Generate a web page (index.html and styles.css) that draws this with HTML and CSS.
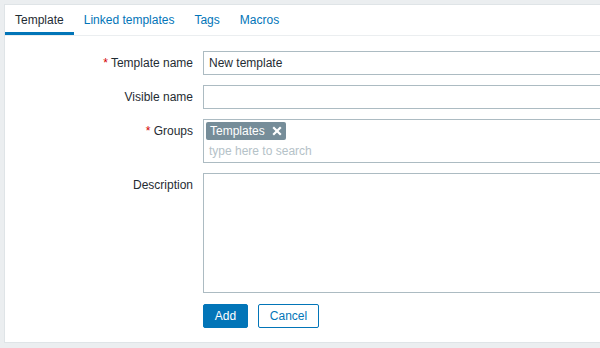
FILE: index.html
```html
<!DOCTYPE html>
<html>
<head>
<meta charset="utf-8">
<link rel="stylesheet" href="styles.css">
</head>
<body>
<div class="panel">
  <ul class="tabs">
    <li class="tab active">Template</li>
    <li class="tab">Linked templates</li>
    <li class="tab">Tags</li>
    <li class="tab">Macros</li>
  </ul>
  <form class="form">
    <label class="label"><span class="req">*</span> Template name</label>
    <div class="field"><input class="input" type="text" value="New template"></div>

    <label class="label">Visible name</label>
    <div class="field"><input class="input" type="text"></div>

    <label class="label"><span class="req">*</span> Groups</label>
    <div class="field">
      <div class="multiselect">
        <div class="tags">
          <span class="tag">Templates
            <svg class="tag-x" width="10" height="10" viewBox="0 0 10 10"><path d="M1.2 1.2L8.8 8.8M8.8 1.2L1.2 8.8" stroke="#fff" stroke-width="2.2"/></svg>
          </span>
        </div>
        <div class="search">type here to search</div>
      </div>
    </div>

    <label class="label">Description</label>
    <div class="field"><textarea class="textarea"></textarea></div>

    <div></div>
    <div class="buttons">
      <button type="button" class="btn btn-primary">Add</button>
      <button type="button" class="btn btn-alt">Cancel</button>
    </div>
  </form>
</div>
</body>
</html>
```
FILE: styles.css
```css
html, body {
  margin: 0;
  padding: 0;
  overflow: hidden;
}
body {
  background: #ebeef0;
  font-family: "Liberation Sans", Arial, sans-serif;
  font-size: 12px;
  color: #1f2c33;
  width: 600px;
  height: 348px;
}
.panel {
  margin: 4px 0 0 4px;
  width: 700px;
  background: #fff;
  border: 1px solid #dfe4e7;
  border-right: none;
  box-sizing: border-box;
  height: 339px;
  overflow: hidden;
}
.tabs {
  list-style: none;
  margin: 0;
  padding: 0;
  display: flex;
  height: 30px;
  border-bottom: 1px solid #ebeef0;
}
.tab {
  padding: 3px 10px 0 10px;
  height: 24px;
  line-height: 24px;
  color: #0275b8;
  border-bottom: 3px solid transparent;
}
.tab.active {
  color: #1f2c33;
  border-bottom-color: #0275b8;
}
.form {
  display: grid;
  grid-template-columns: 188px 453px;
  column-gap: 10px;
  row-gap: 10px;
  padding-top: 15px;
}
.label {
  text-align: right;
  line-height: 24px;
  white-space: nowrap;
}
.req {
  color: #d40000;
}
.input {
  display: block;
  box-sizing: border-box;
  width: 453px;
  height: 24px;
  border: 1px solid #acbbc2;
  padding: 0 5px;
  margin: 0;
  font-family: inherit;
  font-size: 12px;
  color: #1f2c33;
  outline: none;
}
.multiselect {
  box-sizing: border-box;
  width: 453px;
  height: 44px;
  border: 1px solid #acbbc2;
  padding: 2px 2px 0 2px;
}
.tags {
  display: flex;
  height: 18px;
}
.tag {
  display: inline-flex;
  align-items: center;
  background: #768d99;
  color: #fff;
  height: 18px;
  padding: 0 4px 0 4px;
  border-radius: 2px;
  gap: 7px;
}
.tag-x {
  display: block;
}
.search {
  color: #b5c2c8;
  padding-left: 3px;
  line-height: 23px;
}
.textarea {
  display: block;
  box-sizing: border-box;
  width: 453px;
  height: 120px;
  border: 1px solid #acbbc2;
  margin: 0;
  resize: none;
  outline: none;
}
.buttons {
  display: flex;
  gap: 10px;
  margin-top: 1px;
}
.btn {
  box-sizing: border-box;
  height: 24px;
  font-family: inherit;
  font-size: 12px;
  border-radius: 2px;
  padding: 0;
  margin: 0;
}
.btn-primary {
  width: 45px;
  background: #0275b8;
  border: 1px solid #0275b8;
  color: #fff;
}
.btn-alt {
  width: 61px;
  background: #fff;
  border: 1px solid #0275b8;
  color: #0275b8;
}
```
